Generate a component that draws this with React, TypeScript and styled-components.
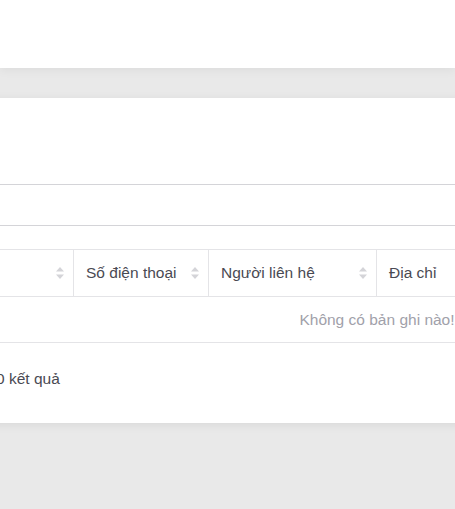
import React from 'react';
import styled, { createGlobalStyle } from 'styled-components';

const GlobalStyle = createGlobalStyle`
  html, body {
    margin: 0;
    padding: 0;
    background: #e9e9e9;
    overflow: hidden;
  }
  body {
    font-family: "Liberation Sans", Arial, Helvetica, sans-serif;
    color: #4a4a53;
  }
`;

interface IColumn {
  key: string;
  title: string;
  width: number;
  sortable: boolean;
}

// the first column lies mostly past the left edge, only its sort arrows show
const columns: IColumn[] = [
  { key: 'name', title: '', width: 373, sortable: true },
  { key: 'phone', title: 'Số điện thoại', width: 135, sortable: true },
  { key: 'contact', title: 'Người liên hệ', width: 168, sortable: true },
  { key: 'address', title: 'Địa chỉ', width: 678, sortable: false },
];

const Page = styled.div`
  display: flex;
  flex-direction: column;
  min-height: 509px;
`;

const TopBar = styled.header`
  height: 68px;
  background: #fff;
  box-shadow: 0 2px 10px rgba(0, 0, 0, 0.06);
  position: relative;
  z-index: 1;
`;

const Content = styled.main`
  padding-top: 30px;
`;

const Card = styled.section`
  width: 1354px;
  margin-left: -300px;
  background: #fff;
  box-shadow: 0 2px 10px rgba(0, 0, 0, 0.07);
  display: flex;
  flex-direction: column;
`;

const CardHead = styled.div`
  height: 86px;
`;

const SearchBox = styled.input`
  box-sizing: border-box;
  height: 42px;
  margin: 0 16px;
  border: 1px solid #d4d4d8;
  border-radius: 4px;
  padding: 0 12px;
  font: inherit;
  font-size: 15px;
  outline: none;
`;

const Table = styled.div`
  margin-top: 23px;
  border-top: 1px solid #e4e4e7;
`;

const HeadRow = styled.div`
  display: flex;
  height: 46px;
  border-bottom: 1px solid #e4e4e7;
`;

const HeadCell = styled.div<{ $width: number; $first?: boolean }>`
  box-sizing: border-box;
  width: ${(p) => p.$width}px;
  display: flex;
  align-items: center;
  justify-content: space-between;
  padding: 0 9px 0 12px;
  border-left: ${(p) => (p.$first ? 'none' : '1px solid #e4e4e7')};
  font-size: 15.5px;
  color: #4a4a53;
  white-space: nowrap;
`;

const EmptyRow = styled.div`
  height: 45px;
  border-bottom: 1px solid #e4e4e7;
  display: flex;
  align-items: center;
  justify-content: center;
  font-size: 15.5px;
  color: #a1a1aa;
`;

const Footer = styled.div`
  height: 80px;
  box-sizing: border-box;
  padding: 26px 0 0 296px;
  font-size: 15.5px;
  line-height: 20px;
  color: #4a4a53;
`;

const SortIcon = () => (
  <svg width="8" height="12" viewBox="0 0 8 12" fill="#d4d4d8">
    <path d="M4 0 L8 4.5 H0 Z" />
    <path d="M0 7.5 H8 L4 12 Z" />
  </svg>
);

export default function App() {
  return (
    <>
      <GlobalStyle />
      <Page>
        <TopBar />
        <Content>
          <Card>
            <CardHead />
            <SearchBox aria-label="search" />
            <Table>
              <HeadRow>
                {columns.map((c, i) => (
                  <HeadCell key={c.key} $width={c.width} $first={i === 0}>
                    <span>{c.title}</span>
                    {c.sortable && <SortIcon />}
                  </HeadCell>
                ))}
              </HeadRow>
              <EmptyRow>Không có bản ghi nào!</EmptyRow>
            </Table>
            <Footer>0 kết quả</Footer>
          </Card>
        </Content>
      </Page>
    </>
  );
}
